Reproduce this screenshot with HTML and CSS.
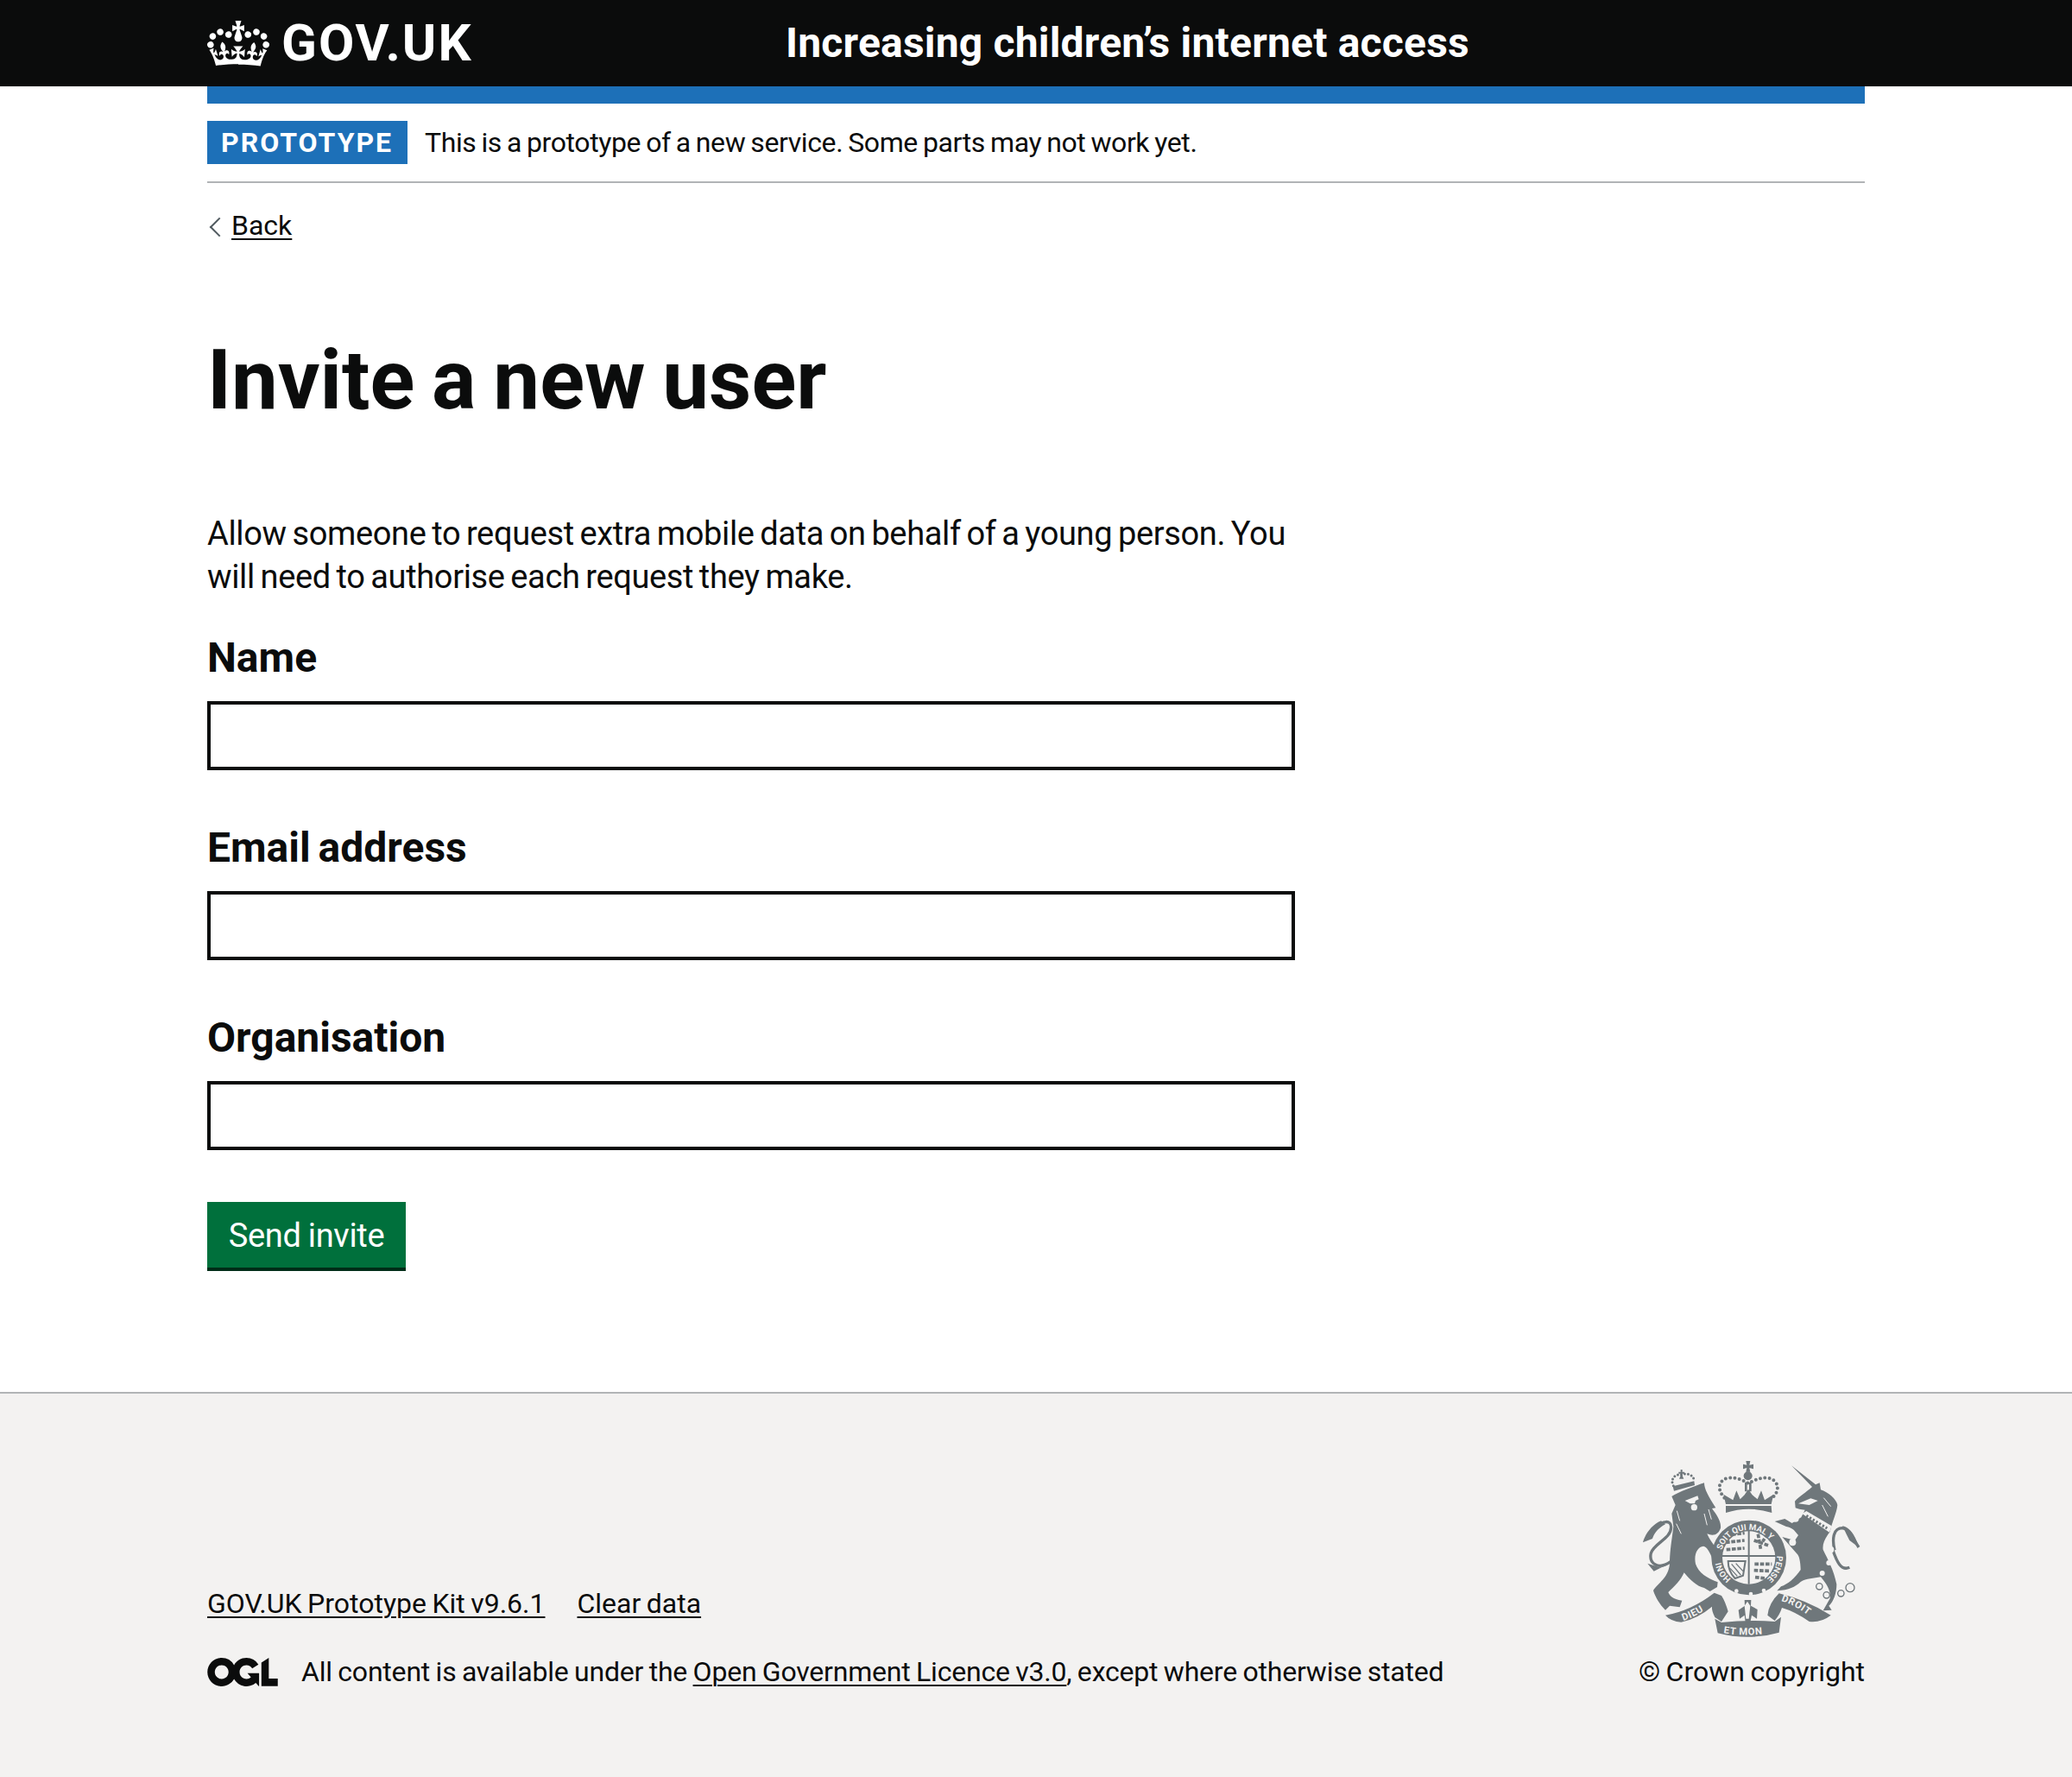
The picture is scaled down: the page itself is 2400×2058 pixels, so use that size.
FILE: index.html
```html
<!DOCTYPE html>
<html lang="en">
<head>
<meta charset="utf-8">
<title>Invite a new user</title>
<link rel="stylesheet" href="styles.css">
</head>
<body>
<header class="site-header">
  <div class="header-inner">
    <div class="logo-col">
      <a class="logo" href="#">
        <svg class="crown" viewBox="0 0 132 97" aria-hidden="true"><path fill="currentColor" fill-rule="evenodd" d="M25 30.2c3.5 1.5 7.7-.2 9.1-3.7 1.5-3.6-.2-7.8-3.9-9.2-3.6-1.4-7.6.3-9.1 3.9-1.4 3.5.3 7.5 3.9 9zM9 39.5c3.6 1.5 7.8-.2 9.2-3.7 1.5-3.6-.2-7.8-3.9-9.1-3.6-1.5-7.6.2-9.1 3.8-1.4 3.5.3 7.5 3.8 9zM4.4 57.2c3.5 1.5 7.7-.2 9.1-3.8 1.5-3.6-.2-7.7-3.9-9.1-3.5-1.5-7.6.3-9.1 3.8-1.4 3.5.3 7.6 3.9 9.1zm38.3-21.4c3.5 1.5 7.7-.2 9.1-3.8 1.5-3.6-.2-7.7-3.9-9.1-3.6-1.5-7.6.3-9.1 3.8-1.3 3.6.4 7.7 3.9 9.1zm64.4-5.6c-3.6 1.5-7.8-.2-9.1-3.7-1.5-3.6.2-7.8 3.8-9.2 3.6-1.4 7.7.3 9.2 3.9 1.3 3.5-.4 7.5-3.9 9zm15.9 9.3c-3.6 1.5-7.7-.2-9.1-3.7-1.5-3.6.2-7.8 3.7-9.1 3.6-1.5 7.7.2 9.2 3.8 1.5 3.5-.3 7.5-3.8 9zm4.7 17.7c-3.6 1.5-7.8-.2-9.2-3.8-1.5-3.6.2-7.7 3.9-9.1 3.6-1.5 7.7.3 9.2 3.8 1.3 3.5-.4 7.6-3.9 9.1zM89.3 35.8c-3.6 1.5-7.8-.2-9.2-3.8-1.4-3.6.2-7.7 3.9-9.1 3.6-1.5 7.7.3 9.2 3.8 1.4 3.6-.3 7.7-3.9 9.1zM69.7 17.7l8.9 4.7V9.3l-8.9 2.8c-.2-.3-.5-.6-.9-.9L72.4 0H59.6l3.5 11.2c-.3.3-.6.5-.9.9l-8.8-2.8v13.1l8.8-4.7c.3.3.6.7.9.9l-5 15.4v.1c-.2.8-.4 1.6-.4 2.4 0 4.1 3.1 7.5 7 8.1h.2c.3 0 .7.1 1 .1.4 0 .7 0 1-.1h.2c4-.6 7.1-4.1 7.1-8.1 0-.8-.1-1.7-.4-2.4V34l-5.1-15.4c.4-.2.7-.6 1-.9zM66 92.8c16.9 0 32.8 1.1 47.1 3.2 4-16.9 8.9-26.7 14-33.5l-9.6-3.4c1 4.9 1.1 7.2 0 10.2-1.5-1.4-3-4.3-4.2-8.7L108.6 76c2.8-2 5-3.2 7.5-3.3-4.4 9.4-10 11.9-13.6 11.2-4.3-.8-6.3-4.6-5.6-7.9 1-4.7 5.7-5.9 8-.5 4.3-8.7-3-11.4-7.6-8.8 7.1-7.2 7.9-13.5 2.1-21.1-8 6.1-8.1 12.3-4.5 20.8-4.7-5.4-12.1-2.5-9.5 6.2 3.4-5.2 7.9-2 7.2 3.1-.6 4.3-6.4 7.8-13.5 7.2-10.3-.9-10.9-8-11.2-13 2.5-.5 7.1 1.8 11 7.3L80.2 60c-4.1 4.4-8 5.3-12.3 5.4 1.4-4.4 8-11.6 8-11.6H55.5s6.4 7.2 7.9 11.6c-4.2-.1-8-1-12.3-5.4l1.4 16.4c3.9-5.5 8.5-7.7 10.9-7.3-.3 5-.7 12.1-11 13-7.2.6-12.9-2.9-13.5-7.2-.7-5 3.8-8.3 7.1-3.1 2.7-8.7-4.6-11.6-9.4-6.2 3.7-8.5 3.6-14.7-4.6-20.8-5.8 7.6-5 13.9 2.2 21.1-4.7-2.6-11.9.1-7.7 8.8 2.3-5.5 7.1-4.2 8.1.5.7 3.3-1.3 7.1-5.7 7.9-3.5.7-9-1.8-13.5-11.2 2.5.1 4.7 1.3 7.5 3.3l-4.7-15.4c-1.2 4.4-2.7 7.2-4.3 8.7-1.1-3-.9-5.3 0-10.2l-9.5 3.4c5 6.9 9.9 16.7 14 33.5 14.8-2.1 30.8-3.2 47.7-3.2z"/></svg>
        <span class="logotype">GOV.UK</span>
      </a>
    </div>
    <a class="service-name" href="#">Increasing children’s internet access</a>
  </div>
</header>

<div class="page-width">
  <div class="phase-banner">
    <strong class="tag">PROTOTYPE</strong>
    <span class="phase-text">This is a prototype of a new service. Some parts may not work yet.</span>
  </div>
  <a class="back-link" href="#">Back</a>
  <main class="main">
    <h1 class="heading">Invite a new user</h1>
    <p class="body-text">Allow someone to request extra mobile data on behalf of a young person. You will need to authorise each request they make.</p>
    <form class="form">
      <div class="form-group">
        <label class="label" for="name">Name</label>
        <input class="input" id="name" type="text">
      </div>
      <div class="form-group">
        <label class="label" for="email">Email address</label>
        <input class="input" id="email" type="text">
      </div>
      <div class="form-group">
        <label class="label" for="org">Organisation</label>
        <input class="input" id="org" type="text">
      </div>
      <button class="button" type="button">Send invite</button>
    </form>
  </main>
</div>

<footer class="footer">
  <div class="footer-inner">
    <div class="meta">
      <ul class="footer-links">
        <li><a href="#">GOV.UK Prototype Kit v9.6.1</a></li>
        <li><a href="#">Clear data</a></li>
      </ul>
      <div class="licence">
        <svg class="ogl" viewBox="0 0 483.2 195.7" aria-hidden="true"><path fill="currentColor" d="M421.5 142.8V.1l-50.7 32.3v161.1h112.4v-50.7zm-122.3-9.6A47.12 47.12 0 0 1 221 97.8c0-26 21.1-47.1 47.1-47.1 16.7 0 31.4 8.7 39.7 21.8l42.7-27.2A97.63 97.63 0 0 0 268.1 0c-36.5 0-68.3 20.1-85.1 49.7A98 98 0 0 0 97.8 0C43.9 0 0 43.9 0 97.8s43.9 97.8 97.8 97.8c36.5 0 68.3-20.1 85.1-49.7a97.76 97.76 0 0 0 149.6 25.4l19.4 22.2h3v-87.8h-80l24.3 27.5zM97.8 145c-26 0-47.1-21.1-47.1-47.1s21.1-47.1 47.1-47.1 47.2 21 47.2 47S123.8 145 97.8 145"/></svg>
        <span class="licence-text">All content is available under the <a href="#">Open Government Licence v3.0</a>, except where otherwise stated</span>
      </div>
    </div>
    <div class="copyright">
      <svg class="arms" viewBox="0 0 900 660" aria-hidden="true">
        <defs>
          <path id="garter-top" d="M346 352 A98 98 0 0 1 534 352"/>
          <path id="garter-right" d="M537 372 A98 98 0 0 1 498 455"/>
          <path id="garter-left" d="M378 452 A98 98 0 0 1 343 392"/>
          <path id="rib-left" d="M212 597 Q270 578 328 530"/>
          <path id="rib-mid" d="M352 640 Q436 654 525 638"/>
          <path id="rib-right" d="M552 528 Q610 545 668 597"/>
        </defs>
        <g class="arms-fill">
          <!-- lion -->
          <path d="M172 165 C195 150 250 130 285 118 C285 140 300 165 325 205 L312 207 C325 225 345 250 342 275 C335 295 320 305 295 295 C305 320 330 345 345 378 L335 395 L315 385 C305 360 295 340 282 338 C262 340 248 365 255 400 C265 430 295 450 332 463 L330 480 L305 495 L285 483 C260 478 235 455 215 430 C205 455 180 480 160 498 C165 510 175 522 208 527 L200 550 L165 545 L150 560 C130 540 115 515 108 492 C125 465 160 450 165 400 C165 350 175 300 178 270 L172 225 L185 195 Z"/>
          <path class="tail" d="M168 392 C125 422 92 398 100 362 C110 328 170 312 170 272 C170 245 140 250 118 272"/>
          <path d="M72 325 C78 300 100 265 135 250 L150 262 C125 275 110 295 105 312 Z"/>
          <path d="M88 398 L130 412 L150 405 L110 425 Z"/>
          <!-- unicorn -->
          <path d="M600 182 C615 165 640 150 660 132 L588 58 L672 124 L686 118 L690 142 C715 150 745 175 748 195 C745 225 730 250 722 288 C705 310 695 330 698 350 C715 385 735 420 745 470 C745 500 735 530 718 545 L728 560 L698 562 L722 520 C725 495 715 475 690 445 C665 450 640 450 620 462 C600 480 580 490 538 493 L552 478 C575 470 600 450 620 420 C620 395 615 370 608 365 L556 306 L600 318 L612 300 C600 285 590 272 570 270 L530 252 L565 243 L590 258 L622 238 L635 212 C620 212 610 208 602 205 Z"/>
          <path class="tail" d="M738 352 C728 310 735 275 765 275 C795 280 800 310 822 342 M732 352 C745 390 760 425 790 412"/>
          <path d="M765 268 C790 272 810 300 822 342 L790 318 Z"/>
          <!-- crown -->
          <path d="M360 192 L352 158 L385 178 L397 145 L410 175 L425 160 L438 140 L452 160 L470 175 L483 145 L495 178 L526 158 L518 192 Z"/>
          <path d="M360 198 L518 198 L520 222 Q440 196 360 222 Z"/>
          <path d="M430 42 L445 42 L442 56 L456 53 L456 70 L442 66 L445 80 L430 80 L433 66 L420 70 L420 53 L433 56 Z"/>
          <circle cx="437" cy="94" r="15"/>
          <path d="M426 116 h8 v32 h-8 Z M441 116 h8 v32 h-8 Z"/>
          <!-- lion crown -->
          <path d="M176 130 L250 112 L252 126 L180 146 Z"/>
          <path d="M198 104 L206 86 L214 104 Z"/>
          <path d="M203 72 h6 v22 h-6 Z M196 80 h20 v6 h-20 Z"/>
          <!-- garter -->
          <circle cx="440" cy="378" r="130"/>
          <!-- ribbons -->
          <path d="M150 578 Q240 562 320 500 L345 510 Q358 530 368 565 L345 600 L322 585 Q310 560 312 548 Q262 590 205 602 Q170 600 150 578 Z"/>
          <path d="M322 590 L345 603 Q440 592 530 600 L552 584 L545 638 Q440 668 332 640 Z"/>
          <path d="M505 578 Q510 535 545 502 Q640 525 725 578 Q690 605 650 600 Q600 565 555 552 Q548 575 530 597 Z"/>
          <!-- fleur -->
          <path d="M425 525 L448 525 L447 545 L470 558 L468 590 L450 578 L445 602 L428 602 L425 578 L408 590 L404 560 L426 545 Z"/>
        </g>
        <g class="arms-pearls">
          <path d="M355 170 C328 140 335 110 365 102 C395 97 420 108 438 120 C460 108 490 95 515 103 C545 115 548 145 522 170"/>
          <path class="small" d="M178 128 C165 105 185 85 205 90 C225 82 250 90 250 112"/>
        </g>
        <g class="arms-light">
          <circle cx="250" cy="203" r="11"/>
          <path d="M218 180 L262 163 L266 175 L255 180 L252 190 L236 190 Z"/>
          <circle cx="440" cy="378" r="92"/>
          <path d="M372 228 Q440 204 508 228 L505 240 Q440 220 375 240 Z"/>
          <circle cx="602" cy="242" r="12"/>
          <circle cx="592" cy="325" r="12"/>
          <circle cx="725" cy="350" r="11"/>
          <circle cx="718" cy="396" r="9"/>
          <circle cx="695" cy="432" r="9"/>
          <circle cx="397" cy="494" r="7"/>
          <circle cx="447" cy="504" r="7"/>
          <circle cx="492" cy="492" r="7"/>
          <path d="M625 225 L640 216 L728 268 L720 290 Z"/>
          <path d="M612 190 L655 172 L680 180 L650 195 Z"/>
          <path d="M425 545 L435 530 L445 545 L440 590 L430 590 Z"/>
        </g>
        <g class="arms-detail">
          <path class="cross" d="M346 372 L534 372 M440 280 L440 470"/>
          <path class="beast" d="M362 300 L425 292 M360 325 L425 318 M362 350 L425 345"/>
          <path class="beast" d="M460 400 L520 400 M458 422 L512 424 M462 446 L498 450"/>
          <path class="beast" d="M472 296 L482 352 M458 318 L510 336 M505 296 L488 322"/>
          <path class="harp" d="M368 390 L428 390 L420 440 L392 450 Q368 425 368 390 Z"/>
          <path class="fine" d="M380 400 L412 438 M395 398 L420 425 M375 415 L400 442"/>
          <path class="collar" d="M640 232 L712 276"/>
        </g>
        <g class="arms-mane">
          <path d="M190 215 L200 250 M188 260 L205 295 M300 210 L310 245 M285 225 L295 265"/>
          <path d="M700 170 L725 200 M695 195 L715 235"/>
        </g>
        <g class="arms-rings">
          <circle cx="685" cy="478" r="11"/>
          <circle cx="710" cy="508" r="11"/>
          <circle cx="760" cy="502" r="11"/>
          <circle cx="792" cy="482" r="15"/>
        </g>
        <text class="arms-text garter-t"><textPath href="#garter-top">SOIT QUI MAL Y</textPath></text>
        <text class="arms-text garter-t"><textPath href="#garter-right">PENSE</textPath></text>
        <text class="arms-text garter-t"><textPath href="#garter-left">HONI</textPath></text>
        <text class="arms-text rib-t"><textPath href="#rib-left">DIEU</textPath></text>
        <text class="arms-text rib-t"><textPath href="#rib-mid">ET MON</textPath></text>
        <text class="arms-text rib-t"><textPath href="#rib-right">DROIT</textPath></text>
      </svg>
      <a class="crown-link" href="#">© Crown copyright</a>
    </div>
  </div>
</footer>
</body>
</html>
```

FILE: styles.css
```css
* { box-sizing: border-box; }
html, body { margin: 0; padding: 0; }
body {
  background: #fff;
  color: #0b0c0c;
  font-family: Roboto, "Liberation Sans", sans-serif;
  font-size: 38px;
  line-height: 50px;
}
a { color: #0b0c0c; text-decoration-thickness: 2px; text-underline-offset: 4px; }

.site-header { background: #0b0c0c; height: 100px; }
.header-inner {
  margin: 0 240px;
  height: 100px;
  display: flex;
  align-items: center;
}
.logo-col { width: 670px; flex: none; }
.logo { display: flex; align-items: center; color: #fff; text-decoration: none; }
.crown { width: 72px; height: 53px; margin-right: 14px; flex: none; }
.logotype { font-weight: 700; font-size: 60px; line-height: 60px; letter-spacing: 2px; }
.service-name {
  color: #fff;
  font-weight: 700;
  font-size: 48px;
  line-height: 50px;
  letter-spacing: 0.2px;
  text-decoration: none;
}

.page-width { margin: 0 240px; }
.phase-banner {
  border-top: 20px solid #1d70b8;
  padding: 20px 0;
  display: flex;
  align-items: center;
  gap: 20px;
  border-bottom: 2px solid #b1b4b6;
  height: 112px;
}
.tag {
  background: #1d70b8;
  color: #fff;
  font-size: 32px;
  line-height: 50px;
  letter-spacing: 2px;
  padding: 0 16px;
  width: 232px;
  height: 50px;
  white-space: nowrap;
}
.phase-text { font-size: 32px; line-height: 50px; letter-spacing: -0.4px; word-spacing: -1.5px; }

.back-link {
  display: inline-block;
  position: relative;
  margin-top: 29px;
  padding-left: 28px;
  font-size: 32px;
  line-height: 40px;
}
.back-link::before {
  content: "";
  position: absolute;
  left: 6px;
  top: 14px;
  width: 14px;
  height: 14px;
  border-left: 2px solid #505a5f;
  border-bottom: 2px solid #505a5f;
  transform: rotate(45deg);
}

.main { padding-top: 106px; }
.heading { margin: 0 0 103px; font-size: 96px; line-height: 100px; font-weight: 700; word-spacing: -4px; }
.body-text { margin: 0 0 39px; width: 1260px; letter-spacing: -0.35px; word-spacing: -2.4px; }
.form { width: 1260px; display: block; }
.form-group { margin-bottom: 60px; }
.label { display: block; font-size: 48px; line-height: 60px; font-weight: 700; margin-bottom: 20px; word-spacing: -3px; }
.input {
  display: block;
  width: 100%;
  height: 80px;
  border: 4px solid #0b0c0c;
  border-radius: 0;
  background: #fff;
  margin: 0;
}
.button {
  display: block;
  width: 230px;
  height: 80px;
  border: 0;
  border-radius: 0;
  padding: 0 0 2px;
  background: #00703c;
  box-shadow: inset 0 -4px 0 #002d18;
  color: #fff;
  font-family: inherit;
  font-size: 38px;
  line-height: 50px;
  letter-spacing: -0.3px;
  word-spacing: -1px;
  margin: 0 0 140px;
}

.footer { background: #f3f2f1; border-top: 2px solid #b1b4b6; height: 446px; font-size: 32px; line-height: 40px; }
.footer-inner {
  margin: 0 240px;
  display: flex;
  justify-content: space-between;
  align-items: flex-end;
  height: 100%;
  padding-bottom: 102px;
}
.footer-links { list-style: none; margin: 0 0 39px; padding: 0; display: flex; gap: 37px; word-spacing: -1.5px; }
.licence { display: flex; align-items: center; }
.licence-text { letter-spacing: -0.2px; word-spacing: -1.3px; }
.ogl { width: 82px; height: 33px; margin-right: 27px; flex: none; }
.copyright { display: flex; flex-direction: column; align-items: flex-end; }
.arms { width: 300px; height: 220px; margin: 0 -19px 18px 0; display: block; }
.arms-fill { fill: #6f777b; }
.arms-light { fill: #f3f2f1; }
.arms-rings { fill: none; stroke: #6f777b; stroke-width: 4; }
.arms-pearls { fill: none; stroke: #6f777b; stroke-width: 12; stroke-linecap: round; stroke-dasharray: 0 16; }
.arms-pearls .small { stroke-width: 9; stroke-dasharray: 0 12; }
.arms-mane { fill: none; stroke: #f3f2f1; stroke-width: 3; }
.tail { fill: none; stroke: #6f777b; stroke-width: 10; }
.arms-detail { fill: none; stroke: #6f777b; }
.cross { stroke-width: 6; }
.beast { stroke-width: 11; stroke-dasharray: 14 5; }
.harp { stroke-width: 6; }
.fine { stroke-width: 4; }
.collar { stroke-width: 9; stroke-dasharray: 7 6; }
.arms-text { fill: #f3f2f1; font-family: Roboto, sans-serif; font-weight: 700; }
.garter-t { font-size: 29px; }
.rib-t { font-size: 34px; letter-spacing: 2px; }
.crown-link { word-spacing: -1.5px; text-decoration: none; }
```
